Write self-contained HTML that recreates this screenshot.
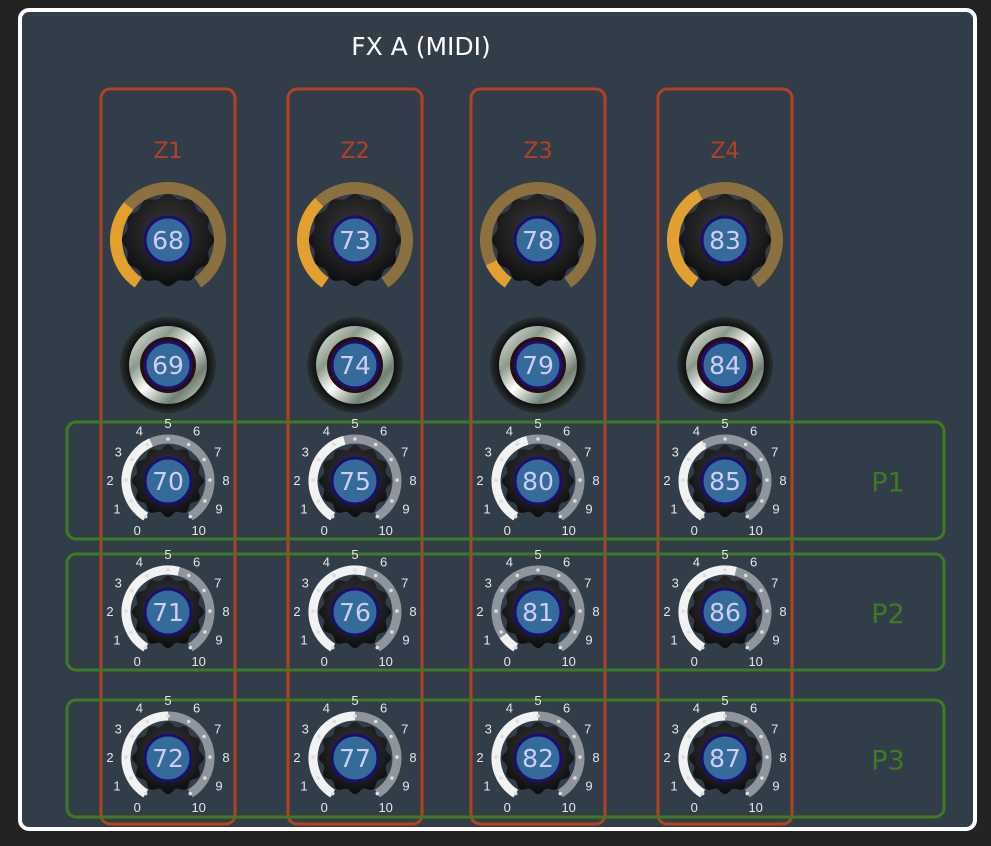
<!DOCTYPE html>
<html><head><meta charset="utf-8"><style>
html,body{margin:0;padding:0;background:#222;width:991px;height:846px;overflow:hidden}
svg{display:block}
</style></head><body>
<svg id="s" width="991" height="846" viewBox="0 0 991 846" xmlns="http://www.w3.org/2000/svg" font-family="DejaVu Sans, Liberation Sans, sans-serif">
<defs>
<radialGradient id="kb" cx="50%" cy="40%" r="60%"><stop offset="0" stop-color="#3a3a3a"/><stop offset="0.7" stop-color="#1c1c1c"/><stop offset="1" stop-color="#0c0c0c"/></radialGradient>
<radialGradient id="ring" cx="50%" cy="50%" r="50%"><stop offset="0.8" stop-color="#0b0d0d"/><stop offset="1" stop-color="#2a3230"/></radialGradient>
<linearGradient id="chr" x1="0" y1="0" x2="1" y2="1"><stop offset="0" stop-color="#f2f2f2"/><stop offset="0.3" stop-color="#8a9a8a"/><stop offset="0.5" stop-color="#ffffff"/><stop offset="0.75" stop-color="#6f7f70"/><stop offset="1" stop-color="#dfe5df"/></linearGradient>
</defs>
<rect x="0" y="0" width="991" height="846" fill="#232323"/>
<rect x="20" y="10" width="955" height="819" rx="9" fill="#323d4a" stroke="#ffffff" stroke-width="4"/>
<text x="421" y="55" font-size="25" fill="#ffffff" text-anchor="middle">FX A (MIDI)</text>
<g id="g"></g>
</svg>
<script>
const g=document.getElementById('g');let h='';
const cols=[168,355,538,725];
const red='#b5421e',green='#3f7a22';
cols.forEach((c,i)=>{h+=`<rect x="${c-67}" y="89" width="134" height="735" rx="9" fill="none" stroke="${red}" stroke-width="3"/>`;
h+=`<text x="${c}" y="158" font-size="22" fill="${red}" text-anchor="middle">Z${i+1}</text>`;});
[[422,117],[554,116],[700,117]].forEach((r,i)=>{h+=`<rect x="67" y="${r[0]}" width="877" height="${r[1]}" rx="9" fill="none" stroke="${green}" stroke-width="3"/>`;
h+=`<text x="888" y="${r[0]+r[1]/2+11}" font-size="27" fill="${green}" text-anchor="middle">P${i+1}</text>`;});
function pt(cx,cy,r,a){a=a*Math.PI/180;return [cx+r*Math.sin(a),cy-r*Math.cos(a)];}
function arc(cx,cy,r,a0,a1,col,w){const p=pt(cx,cy,r,a0),q=pt(cx,cy,r,a1);const l=(a1-a0)>180?1:0;
return `<path d="M${p[0].toFixed(1)} ${p[1].toFixed(1)}A${r} ${r} 0 ${l} 1 ${q[0].toFixed(1)} ${q[1].toFixed(1)}" fill="none" stroke="${col}" stroke-width="${w}"/>`;}
function scallop(cx,cy,r){let d='';const n=12;for(let k=0;k<=n*8;k++){const a=k/(n*8)*360;const rr=r+2.2*Math.cos(a*Math.PI/180*n);const p=pt(cx,cy,rr,a);d+=(k?'L':'M')+p[0].toFixed(1)+' '+p[1].toFixed(1);}return `<path d="${d}Z" fill="url(#kb)"/>`;}
function label(cx,cy,n){return `<circle cx="${cx}" cy="${cy}" r="23" fill="#336b9a" stroke="#1a0f6e" stroke-width="3"/><text x="${cx}" y="${cy+9}" font-size="25" fill="#d0ccf2" text-anchor="middle">${n}</text>`;}
// row1
const v1=[0.33,0.35,0.1,0.4];
cols.forEach((c,i)=>{const cy=240;h+=arc(c,cy,52,-145,145,'#8c7140',12);h+=arc(c,cy,52,-145,-145+290*v1[i],'#e3a02e',12);
h+=scallop(c,cy,44);h+=label(c,cy,68+5*i);});
// row2
cols.forEach((c,i)=>{const cy=365;h+=`<circle cx="${c}" cy="${cy}" r="48" fill="url(#ring)"/><circle cx="${c}" cy="${cy}" r="39" fill="url(#chr)"/><circle cx="${c}" cy="${cy}" r="28" fill="#2a0c0c"/>`;h+=label(c,cy,69+5*i);});
// rows 3-5
const rows=[[481,[0.42,0.45,0.45,0.4]],[612,[0.55,0.55,0.08,0.55]],[758,[0.5,0.5,0.5,0.5]]];
rows.forEach((r,ri)=>{const cy=r[0];cols.forEach((c,i)=>{
h+=arc(c,cy,42,-148,148,'#8e959c',9);h+=arc(c,cy,42,-148,-148+296*r[1][i],'#f2f2f2',9);
for(let k=0;k<=10;k++){const a=-148+29.6*k;const p=pt(c,cy,42,a);h+=`<circle cx="${p[0].toFixed(1)}" cy="${p[1].toFixed(1)}" r="1.8" fill="#dddddd"/>`;
const q=pt(c,cy,58,a);h+=`<text x="${q[0].toFixed(1)}" y="${(q[1]+5).toFixed(1)}" font-family="Liberation Sans, sans-serif" font-size="13" fill="#e6e6e6" text-anchor="middle">${k}</text>`;}
h+=scallop(c,cy,34);h+=label(c,cy,70+ri+5*i);});});
g.innerHTML=h;
</script>
</body></html>
